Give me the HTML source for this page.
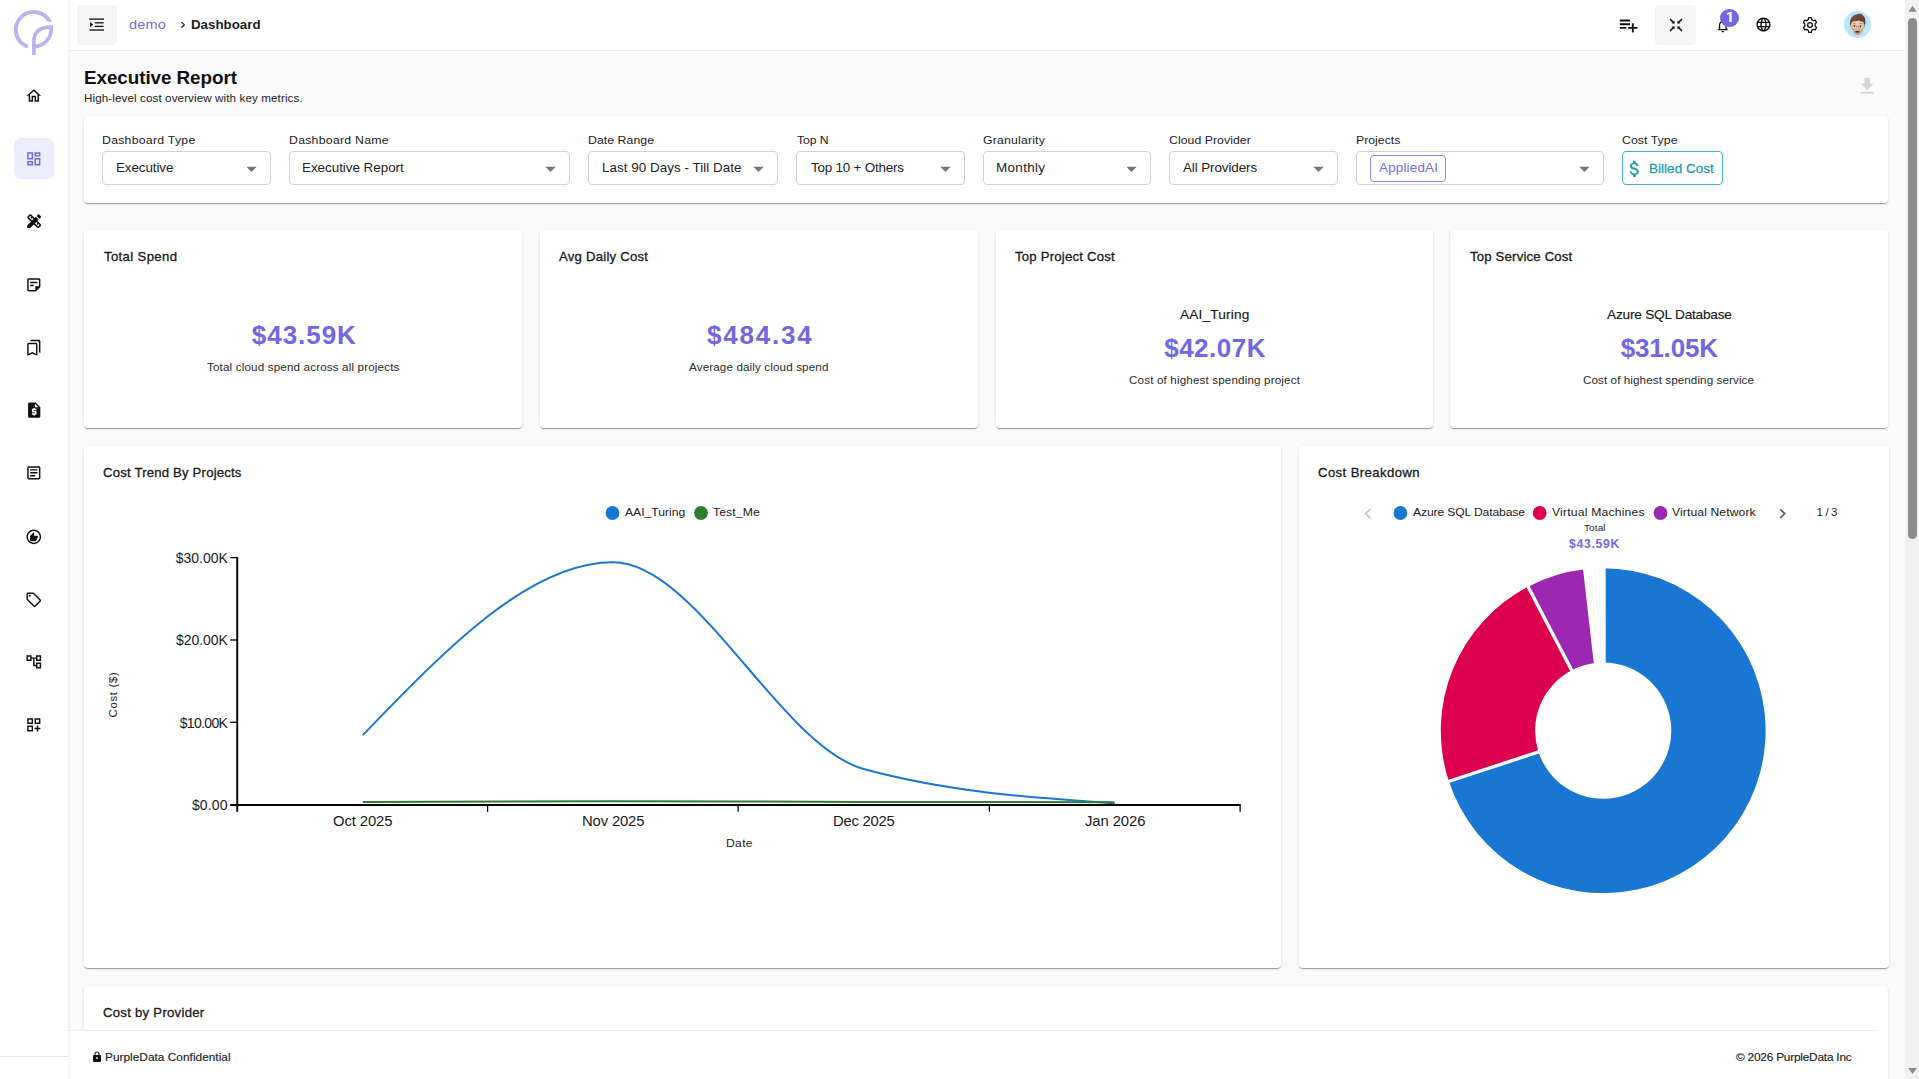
<!DOCTYPE html>
<html lang="en"><head><meta charset="utf-8"><title>Executive Report</title>
<style>
html,body{margin:0;padding:0}
html{width:1919px;height:1079px;overflow:hidden}
body{width:1919px;height:1079px;overflow:hidden;background:#fafafa;position:relative;font-family:"Liberation Sans",sans-serif}
.a{position:absolute;display:block}
.t{position:absolute;white-space:nowrap;line-height:1;font-family:"Liberation Sans",sans-serif}
.card{background:#fff;border-radius:4px;box-shadow:0 2px 1px -1px rgba(0,0,0,.2),0 1px 1px 0 rgba(0,0,0,.14),0 1px 3px 0 rgba(0,0,0,.12)}
.sel{box-sizing:border-box;border:1px solid #d2d2d2;border-radius:4px;background:#fff}
</style></head>
<body>
<div class="a card" style="left:84px;top:116px;width:1804px;height:87px"></div>
<div class="a sel" style="left:102px;top:151.300px;width:169px;height:33.300px"></div>
<svg class="a" style="left:246.00px;top:160px" width="16" height="16" viewBox="0 0 16 16"><path d="M0.300 6.750 H10.700 L5.500 12.050Z" fill="#757575"/></svg>
<div class="a sel" style="left:289px;top:151.300px;width:281px;height:33.300px"></div>
<svg class="a" style="left:545.00px;top:160px" width="16" height="16" viewBox="0 0 16 16"><path d="M0.300 6.750 H10.700 L5.500 12.050Z" fill="#757575"/></svg>
<div class="a sel" style="left:588px;top:151.300px;width:190px;height:33.300px"></div>
<svg class="a" style="left:753.00px;top:160px" width="16" height="16" viewBox="0 0 16 16"><path d="M0.300 6.750 H10.700 L5.500 12.050Z" fill="#757575"/></svg>
<div class="a sel" style="left:796px;top:151.300px;width:169px;height:33.300px"></div>
<svg class="a" style="left:940.00px;top:160px" width="16" height="16" viewBox="0 0 16 16"><path d="M0.300 6.750 H10.700 L5.500 12.050Z" fill="#757575"/></svg>
<div class="a sel" style="left:983px;top:151.300px;width:168px;height:33.300px"></div>
<svg class="a" style="left:1126.00px;top:160px" width="16" height="16" viewBox="0 0 16 16"><path d="M0.300 6.750 H10.700 L5.500 12.050Z" fill="#757575"/></svg>
<div class="a sel" style="left:1169px;top:151.300px;width:169px;height:33.300px"></div>
<svg class="a" style="left:1313.00px;top:160px" width="16" height="16" viewBox="0 0 16 16"><path d="M0.300 6.750 H10.700 L5.500 12.050Z" fill="#757575"/></svg>
<div class="a sel" style="left:1356px;top:151.300px;width:248px;height:33.300px"></div>
<svg class="a" style="left:1579.00px;top:160px" width="16" height="16" viewBox="0 0 16 16"><path d="M0.300 6.750 H10.700 L5.500 12.050Z" fill="#757575"/></svg>
<div class="a" style="left:1369.900px;top:155px;width:75.900px;height:26.900px;box-sizing:border-box;border:1px solid #9087ee;border-radius:4px"></div>
<div class="a" style="left:1622px;top:151.300px;width:100.800px;height:33.400px;box-sizing:border-box;border:1px solid #45b3c2;border-radius:4px"></div>
<svg class="a" style="left:1623.800px;top:157.600px" width="21.600" height="21.600" viewBox="0 0 24 24" fill="#1f9cae"><path d="M11.800 10.900c-2.270-.59-3-1.200-3-2.150 0-1.090 1.010-1.850 2.700-1.850 1.780 0 2.440.85 2.500 2.100h2.210c-.07-1.720-1.120-3.300-3.210-3.810V3h-3v2.160c-1.940.42-3.500 1.680-3.500 3.610 0 2.310 1.910 3.460 4.700 4.130 2.500.6 3 1.480 3 2.410 0 .69-.49 1.790-2.700 1.790-2.060 0-2.870-.92-2.980-2.100h-2.200c.12 2.190 1.760 3.420 3.680 3.830V21h3v-2.150c1.950-.37 3.500-1.500 3.500-3.550 0-2.840-2.430-3.810-4.700-4.400z"/></svg>
<div class="a card" style="left:84px;top:229.8px;width:437.9px;height:198.6px"></div>
<div class="a card" style="left:539.7px;top:229.8px;width:437.9px;height:198.6px"></div>
<div class="a card" style="left:995.6px;top:229.8px;width:437.9px;height:198.6px"></div>
<div class="a card" style="left:1449.8px;top:229.8px;width:437.9px;height:198.6px"></div>
<div class="a card" style="left:84px;top:446px;width:1196.8px;height:521.8px"></div>
<svg class="a" style="left:84px;top:446px" width="1197" height="522" viewBox="84 446 1197 522"><path d="M362.80 735.10 C446.20 648.65 529.60 562.20 613.00 562.20 C696.57 562.20 780.13 746.08 863.70 769.00 C947.33 791.93 1030.97 797.67 1114.60 803.40" fill="none" stroke="#1976d2" stroke-width="2"/><path d="M362.80 801.90 C446.20 801.55 529.60 801.20 613.00 801.20 C696.57 801.20 780.13 801.73 863.70 801.90 C947.33 802.07 1030.97 802.13 1114.60 802.20" fill="none" stroke="#2e7d32" stroke-width="2"/><g stroke="#000" fill="none"><path d="M237.250 556.950 V811.800" stroke-width="1.900"/><path d="M230.200 805 H1240.700" stroke-width="2"/><path d="M230.200 557.6 H237.200" stroke-width="1.300"/><path d="M230.200 640.0 H237.200" stroke-width="1.300"/><path d="M230.200 722.3 H237.200" stroke-width="1.300"/><path d="M487.6 805 V811.800" stroke-width="1.300"/><path d="M738.1 805 V811.800" stroke-width="1.300"/><path d="M989.4 805 V811.800" stroke-width="1.300"/><path d="M1240.1 805 V811.800" stroke-width="1.300"/></g><circle cx="612.500" cy="513" r="6.900" fill="#1976d2"/><circle cx="701" cy="513" r="6.900" fill="#2e7d32"/></svg>
<div class="a card" style="left:1299.2px;top:446px;width:589.9px;height:521.8px"></div>
<svg class="a" style="left:1299px;top:446px" width="590" height="522" viewBox="1299 446 590 522"><path d="M1603.20 568.30 A162.4 162.4 0 1 1 1448.89 781.32 L1538.49 751.92 A68.1 68.1 0 1 0 1603.20 662.60 Z" fill="#1976d2"/><path d="M1448.89 781.32 A162.4 162.4 0 0 1 1528.06 586.73 L1571.69 670.33 A68.1 68.1 0 0 0 1538.49 751.92 Z" fill="#dc004e"/><path d="M1528.06 586.73 A162.4 162.4 0 0 1 1584.76 569.35 L1595.47 663.04 A68.1 68.1 0 0 0 1571.69 670.33 Z" fill="#9c27b0"/><path d="M1603.20 665.60 L1603.20 565.30" stroke="#fff" stroke-width="5"/><path d="M1541.34 750.99 L1446.04 782.25" stroke="#fff" stroke-width="3.4"/><path d="M1573.08 672.99 L1526.67 584.07" stroke="#fff" stroke-width="3.4"/><path d="M1595.81 666.02 L1584.42 566.37" stroke="#fff" stroke-width="3.400"/><path d="M1597.90 661.80 L1590.82 569.78" stroke="#eef0fb" stroke-width="0.600"/><path d="M1599.82 661.68 L1595.32 569.49" stroke="#eef0fb" stroke-width="0.600"/><path d="M1601.27 661.63 L1598.69 569.36" stroke="#eef0fb" stroke-width="0.600"/><circle cx="1400.400" cy="513" r="6.900" fill="#1976d2"/><circle cx="1539.700" cy="513" r="6.900" fill="#dc004e"/><circle cx="1660.500" cy="513" r="6.900" fill="#9c27b0"/><path d="M1370.400 509.200 L1365.600 513.600 L1370.400 518" fill="none" stroke="#c9c9c9" stroke-width="1.800"/><path d="M1780.200 509.400 L1784.800 513.600 L1780.200 517.800" fill="none" stroke="#5a5a5a" stroke-width="1.600"/></svg>
<div class="a card" style="border-radius:4px 4px 0 0;left:84px;top:986px;width:1804.4px;height:93px"></div>
<div class="a" style="left:68px;top:1030px;width:1809px;height:48px;background:#fff;border-top:1px solid #efefef"></div>
<svg class="a" style="left:91.300px;top:1051.300px" width="12" height="12" viewBox="0 0 24 24" fill="#111"><path d="M18 8h-1V6c0-2.760-2.240-5-5-5S7 3.240 7 6v2H6c-1.100 0-2 .9-2 2v10c0 1.100.9 2 2 2h12c1.100 0 2-.9 2-2V10c0-1.100-.9-2-2-2zM9 6c0-1.660 1.340-3 3-3s3 1.340 3 3v2H9V6z"/><rect x="10.300" y="12.500" width="3.400" height="3" fill="#fff"/></svg>
<div class="a" style="left:1905px;top:0;width:14px;height:1079px;background:#f1f1f1"></div>
<div class="a" style="left:1908px;top:17.500px;width:9px;height:521.500px;border-radius:4.500px;background:#8a8a8a"></div>
<svg class="a" style="left:1905px;top:0" width="14" height="1079" viewBox="1905 0 14 1079" fill="#8a8a8a"><path d="M1908.500 11.700 H1916.700 L1912.600 5.800Z"/><path d="M1908.300 1068.100 H1916.900 L1912.600 1074Z"/></svg>
<div class="a" style="left:68px;top:0;width:1837px;height:50px;background:#fff;border-bottom:1px solid #ececec"></div>
<div class="a" style="left:77px;top:5px;width:40px;height:39.700px;border-radius:4px;background:#f5f5f5"></div>
<svg class="a" style="left:85px;top:13px" width="24" height="24" viewBox="85 13 24 24" fill="#111">
<rect x="89.400" y="18.450" width="14.600" height="1.300"/><rect x="94.800" y="22.150" width="8.800" height="1.300"/>
<rect x="94.800" y="25.750" width="8.800" height="1.300"/><rect x="89.400" y="29.350" width="14.600" height="1.300"/>
<path d="M90 22.200 L93.200 24.600 L90 27z"/></svg>
<svg class="a" style="left:176px;top:16px" width="14" height="18" viewBox="176 16 14 18" fill="none" stroke="#222" stroke-width="1.250"><path d="M181.300 22.100 L184.400 24.900 L181.300 27.700"/></svg>
<svg class="a" style="left:1617.30px;top:13.70px" width="22.300" height="22.300" viewBox="0 0 24 24" fill="#111"><path d="M14 10H3v2h11v-2zm0-4H3v2h11V6zm4 8v-4h-2v4h-4v2h4v4h2v-4h4v-2h-4zM3 16h7v-2H3v2z"/></svg>
<div class="a" style="left:1655.300px;top:5px;width:40.300px;height:39.700px;border-radius:4px;background:#f5f5f5"></div>
<svg class="a" style="left:1663.900px;top:12.900px" width="24" height="24" viewBox="1663.900 12.900 24 24" fill="#111" stroke="#111"><path d="M1670.00 19.00 L1672.90 21.90" stroke-width="1.500" fill="none"/><path d="M1674.60 23.60 L1674.20 20.30 L1671.30 23.20Z" stroke="none"/><path d="M1681.80 19.00 L1678.90 21.90" stroke-width="1.500" fill="none"/><path d="M1677.20 23.60 L1677.60 20.30 L1680.50 23.20Z" stroke="none"/><path d="M1670.00 30.80 L1672.90 27.90" stroke-width="1.500" fill="none"/><path d="M1674.60 26.20 L1674.20 29.50 L1671.30 26.60Z" stroke="none"/><path d="M1681.80 30.80 L1678.90 27.90" stroke-width="1.500" fill="none"/><path d="M1677.20 26.20 L1677.60 29.50 L1680.50 26.60Z" stroke="none"/></svg>
<svg class="a" style="left:1714.900px;top:17.600px" width="15.600" height="15.600" viewBox="0 0 24 24" fill="#111"><path d="M12 22c1.100 0 2-.9 2-2h-4c0 1.100.9 2 2 2zm6-6v-5c0-3.070-1.630-5.640-4.500-6.320V4c0-.83-.67-1.500-1.500-1.500s-1.500.67-1.500 1.500v.68C7.640 5.360 6 7.920 6 11v5l-2 2v1h16v-1l-2-2zm-2 1H8v-6c0-2.480 1.510-4.500 4-4.500s4 2.020 4 4.500v6z"/></svg>
<div class="a" style="left:1720.200px;top:8.700px;width:18.800px;height:18.400px;border-radius:50%;background:#7166e6"></div>
<svg class="a" style="left:1720px;top:8px" width="20" height="20" viewBox="1720 8 20 20"><path d="M1731.700 11.900 V22.100 H1729.300 V14.300 L1727.100 14.900 V12.900 L1729.700 11.900Z" fill="#fff"/></svg>
<svg class="a" style="left:1754.900px;top:16.100px" width="17" height="17" viewBox="0 0 24 24" fill="#111"><path d="M11.990 2C6.470 2 2 6.480 2 12s4.470 10 9.990 10C17.520 22 22 17.520 22 12S17.520 2 11.990 2zm6.930 6h-2.950c-.32-1.250-.78-2.450-1.380-3.560 1.840.63 3.370 1.910 4.330 3.560zM12 4.040c.83 1.200 1.480 2.530 1.910 3.960h-3.820c.43-1.430 1.080-2.760 1.910-3.960zM4.260 14C4.100 13.360 4 12.690 4 12s.1-1.360.26-2h3.380c-.08.660-.14 1.320-.14 2 0 .68.060 1.340.14 2H4.260zm.82 2h2.950c.32 1.250.78 2.450 1.380 3.560-1.840-.63-3.370-1.900-4.330-3.560zm2.950-8H5.080c.96-1.660 2.490-2.930 4.330-3.560C8.810 5.550 8.350 6.750 8.030 8zM12 19.960c-.83-1.200-1.480-2.530-1.910-3.960h3.820c-.43 1.430-1.080 2.760-1.910 3.960zM14.340 14H9.660c-.09-.66-.16-1.320-.16-2 0-.68.070-1.350.16-2h4.680c.09.650.16 1.320.16 2 0 .68-.07 1.340-.16 2zm.25 5.560c.6-1.110 1.060-2.310 1.380-3.560h2.950c-.96 1.650-2.490 2.930-4.330 3.560zM16.360 14c.08-.66.14-1.320.14-2 0-.68-.06-1.340-.14-2h3.380c.16.640.26 1.310.26 2s-.1 1.360-.26 2h-3.380z"/></svg>
<svg class="a" style="left:1797.80px;top:12.80px" width="24" height="24" viewBox="1797.80 12.80 24 24" fill="none" stroke="#111" stroke-width="1.300" stroke-linejoin="round"><path d="M1808.09 19.46 L1808.54 17.47 L1811.06 17.47 L1811.51 19.46 L1813.25 20.54 L1815.07 19.96 L1816.33 22.31 L1814.96 23.72 L1814.96 25.88 L1816.33 27.29 L1815.07 29.64 L1813.25 29.06 L1811.51 30.14 L1811.06 32.13 L1808.54 32.13 L1808.09 30.14 L1806.35 29.06 L1804.53 29.64 L1803.27 27.29 L1804.64 25.88 L1804.64 23.72 L1803.27 22.31 L1804.53 19.96 L1806.35 20.54Z"/><circle cx="1809.80" cy="24.80" r="2.350"/></svg>
<svg class="a" style="left:1844.00px;top:10.90px" width="27.00" height="27.00" viewBox="0 0 27.200 27.200">
<defs><linearGradient id="sk" x1="0" y1="0" x2="0" y2="1"><stop offset="0" stop-color="#f2d6bd"/><stop offset="0.550" stop-color="#e3b697"/><stop offset="1" stop-color="#cf9a7c"/></linearGradient>
<linearGradient id="hr" x1="0" y1="0" x2="1" y2="1"><stop offset="0" stop-color="#7a5443"/><stop offset="1" stop-color="#553527"/></linearGradient></defs>
<circle cx="13.600" cy="13.600" r="13.600" fill="#b9e6fe"/>
<path d="M6.400 14.500 C6 15.600 6.500 17.400 7.500 17.600 L7.500 14.500Z M20.900 14.600 C21.300 15.700 20.800 17.400 19.900 17.600 L19.900 14.600Z" fill="#d4a083"/>
<path d="M7.100 13 C6.900 20 10.500 24.400 13.700 24.400 C16.900 24.400 20.500 20 20.300 13 C20.100 7.500 7.300 7.500 7.100 13Z" fill="url(#sk)"/>
<path d="M6.300 15.800 C5 9 7.500 3.800 13.300 3.200 C15.800 2.500 18.300 3 18.900 4.300 C21.800 6.500 22.100 11.200 21 15.900 C20.400 13.200 19.700 11.700 19 10.700 C17.600 11 15.900 10.300 14.600 9.300 C13.800 10.600 10 9.900 8.700 10.500 C7.500 11.700 6.900 13.500 6.300 15.800Z" fill="url(#hr)"/>
<path d="M8.700 12.700 Q10.300 12 11.900 12.600 M15.300 12.700 Q16.900 12.100 18.500 12.800" fill="none" stroke="#8a644f" stroke-width="0.600"/>
<rect x="8" y="14.200" width="4.500" height="3.900" rx="1.300" fill="#f3ebe4" fill-opacity="0.550" stroke="#9b948f" stroke-width="0.550"/>
<rect x="14.800" y="14.300" width="4.500" height="3.900" rx="1.300" fill="#f3ebe4" fill-opacity="0.550" stroke="#9b948f" stroke-width="0.550"/>
<path d="M12.500 15.600 H14.800" stroke="#9b948f" stroke-width="0.500"/>
<ellipse cx="10.600" cy="15.400" rx="0.850" ry="0.950" fill="#3f322d"/><ellipse cx="16.600" cy="15.600" rx="0.850" ry="0.950" fill="#3f322d"/>
<path d="M11.100 20.400 Q13.500 19.900 15.900 20.400 Q15.300 22.300 13.500 22.300 Q11.700 22.300 11.100 20.400Z" fill="#4b2822"/>
<path d="M12 21.500 Q13.500 21 15 21.500 Q14.400 22.300 13.500 22.300 Q12.600 22.300 12 21.500Z" fill="#a55b4e"/>
</svg>
<svg class="a" style="left:1856.30px;top:75.40px" width="22.400" height="22.400" viewBox="0 0 24 24" fill="#d6d6d6"><path d="M5 20h14v-2H5v2zM19 9h-4V3H9v6H5l7 7 7-7z"/></svg>
<div class="a" style="left:0;top:0;width:68px;height:1079px;background:#fff;box-shadow:1px 0 3px rgba(0,0,0,.055)"></div>
<svg class="a" style="left:0;top:0" width="68" height="62" viewBox="0 0 68 62" fill="none" stroke="#bab3f1" stroke-width="3.9">
<path d="M50.250 23.110 A17.850 17.850 0 1 0 27.800 46.650"/>
<path d="M46 21 L54.500 22.900 V25 H46Z" fill="#fff" stroke="none"/>
<path d="M33.900 55 V41 C33.900 31.500 41 26.600 51.300 27.100 C51.800 38.500 44.500 45.800 34.300 46.800" stroke-width="3.700" stroke-linejoin="miter"/>
</svg>
<div class="a" style="left:14px;top:138px;width:40px;height:41px;border-radius:7px;background:#edecfb"></div>
<svg class="a" style="left:25.10px;top:86.70px" width="17.6" height="17.6" viewBox="0 0 24 24" fill="#111"><path d="M12 5.69l5 4.5V18h-2v-6H9v6H7v-7.81l5-4.5M12 3L2 12h3v8h6v-6h2v6h6v-8h3L12 3z"/></svg>
<svg class="a" style="left:25.10px;top:150.10px" width="17.6" height="17.6" viewBox="0 0 24 24" fill="#7166e6"><path d="M19 5v2h-4V5h4M9 5v6H5V5h4m10 8v6h-4v-6h4M9 17v2H5v-2h4M21 3h-8v6h8V3zM11 3H3v10h8V3zm10 8h-8v10h8V11zm-10 4H3v6h8v-6z"/></svg>
<svg class="a" style="left:24.70px;top:211.80px" width="18.4" height="18.4" viewBox="0 0 24 24" fill="#111"><path d="M16.24 11.51l1.57-1.57-3.75-3.75-1.57 1.57-4.14-4.13c-.78-.78-2.05-.78-2.83 0l-1.9 1.9c-.78.78-.78 2.05 0 2.83l4.13 4.13L3 17.25V21h3.75l4.76-4.76 4.13 4.13c.95.95 2.23.6 2.83 0l1.9-1.9c.78-.78.78-2.05 0-2.83l-4.13-4.13zm-7.06-.44L5.04 6.94l1.89-1.9L8.2 6.31 7.02 7.5l1.41 1.41 1.19-1.19 1.45 1.45-1.89 1.9zm7.88 7.89l-4.13-4.13 1.9-1.9 1.45 1.45-1.19 1.19 1.41 1.41 1.19-1.19 1.27 1.27-1.9 1.9zM20.71 7.04c.39-.39.39-1.02 0-1.41l-2.34-2.34c-.47-.47-1.12-.29-1.41 0l-1.83 1.83 3.75 3.75 1.83-1.83z"/></svg>
<svg class="a" style="left:25.10px;top:276.10px" width="17.6" height="17.6" viewBox="0 0 24 24" fill="#111"><path d="M19 5v9h-5v5H5V5h14m0-2H5c-1.1 0-2 .9-2 2v14c0 1.1.9 2 2 2h10l6-6V5c0-1.1-.9-2-2-2zm-7 11H7v-2h5v2zm5-4H7V8h10v2z"/></svg>
<svg class="a" style="left:25.10px;top:339.00px" width="17.6" height="17.6" viewBox="0 0 24 24" fill="#111"><path d="M15 7v12.97l-4.21-1.81-.79-.34-.79.34L5 19.97V7h10m4-6H8.99C7.89 1 7 1.9 7 3h10c1.1 0 2 .9 2 2v13l2 1V3c0-1.1-.9-2-2-2zm-4 4H5c-1.1 0-2 .9-2 2v16l7-3 7 3V7c0-1.1-.9-2-2-2z"/></svg>
<svg class="a" style="left:24.70px;top:401.10px" width="18.4" height="18.4" viewBox="0 0 24 24" fill="#111"><path d="M14 2H6c-1.1 0-2 .9-2 2v16c0 1.1.9 2 2 2h12c1.1 0 2-.9 2-2V8l-6-6zm1 10h-4v1h3c.55 0 1 .45 1 1v3c0 .55-.45 1-1 1h-1v1h-2v-1H9v-2h4v-1h-3c-.55 0-1-.45-1-1v-3c0-.55.45-1 1-1h1V9h2v1h2v2zm-2-4V3.5L17.500 8H13z"/></svg>
<svg class="a" style="left:25.10px;top:464.20px" width="17.6" height="17.6" viewBox="0 0 24 24" fill="#111"><path d="M19 5v14H5V5h14m0-2H5c-1.1 0-2 .9-2 2v14c0 1.1.9 2 2 2h14c1.1 0 2-.9 2-2V5c0-1.1-.9-2-2-2z"/><path d="M14 17H7v-2h7v2zm3-4H7v-2h10v2zm0-4H7V7h10v2z"/></svg>
<svg class="a" style="left:25.10px;top:527.90px" width="17.6" height="17.6" viewBox="0 0 24 24" fill="#111"><path d="M12 2C6.480 2 2 6.480 2 12s4.480 10 10 10 10-4.480 10-10S17.520 2 12 2zm0 18c-4.410 0-8-3.590-8-8s3.590-8 8-8 8 3.590 8 8-3.590 8-8 8z"/><path d="M12.300 5.300L6.800 10.800V16.500c0 .83.67 1.500 1.500 1.500h5.700c.6 0 1.140-.36 1.380-.91l2.100-4.600c.4-.9-.3-1.990-1.300-1.990h-4.100l.63-3.030c.07-.33-.03-.67-.27-.91z"/></svg>
<svg class="a" style="left:25.10px;top:590.90px" width="17.6" height="17.6" viewBox="0 0 24 24" fill="#111"><path d="M21.410 11.580l-9-9C12.050 2.220 11.550 2 11 2H4c-1.100 0-2 .9-2 2v7c0 .55.220 1.050.59 1.420l9 9c.36.360.86.580 1.410.580s1.050-.220 1.410-.590l7-7c.37-.360.59-.860.59-1.410s-.23-1.060-.59-1.420zM13 20.010L4 11V4h7v-.010l9 9-7 7.020z"/><circle cx="6.500" cy="6.500" r="1.500"/></svg>
<svg class="a" style="left:25.10px;top:653.20px" width="17.6" height="17.6" viewBox="0 0 24 24" fill="#111"><path d="M22 11V3h-7v3H9V3H2v8h7V8h2v10h4v3h7v-8h-7v3h-2V8h2v3h7zM7 9H4V5h3v4zm10 6h3v4h-3v-4zm0-10h3v4h-3V5z"/></svg>
<svg class="a" style="left:25.10px;top:716.20px" width="17.6" height="17.6" viewBox="0 0 24 24" fill="#111"><path d="M3 11h8V3H3v8zm2-6h4v4H5V5zm8-2v8h8V3h-8zm6 6h-4V5h4v4zM3 21h8v-8H3v8zm2-6h4v4H5v-4zm13-2h-2v3h-3v2h3v3h2v-3h3v-2h-3v-3z"/></svg>
<div class="a" style="left:0;top:1056px;width:68px;height:1px;background:#e4e4e4"></div>
<span class="t" style="left:128.54px;top:18.00px;font-size:13.2px;font-weight:400;color:#766bec;letter-spacing:0.160px;transform:scaleX(1.1);transform-origin:0 50%;">demo</span>
<span class="t" style="left:190.59px;top:19.00px;font-size:12.6px;font-weight:700;color:#1e1e1e;letter-spacing:-0.018px;transform:scaleX(1.06);transform-origin:0 50%;">Dashboard</span>
<span class="t" style="left:84.00px;top:70.00px;font-size:17.8px;font-weight:700;color:#111;letter-spacing:-0.063px;transform:scaleX(1.06);transform-origin:0 50%;">Executive Report</span>
<span class="t" style="left:84.42px;top:93.00px;font-size:11px;font-weight:400;color:#222;letter-spacing:0.081px;transform:scaleX(1.06);transform-origin:0 50%;">High-level cost overview with key metrics.</span>
<span class="t" style="left:101.84px;top:134.00px;font-size:11.6px;font-weight:400;color:#222;letter-spacing:0.238px;transform:scaleX(1.06);transform-origin:0 50%;">Dashboard Type</span>
<span class="t" style="left:288.79px;top:134.00px;font-size:11.6px;font-weight:400;color:#222;letter-spacing:0.241px;transform:scaleX(1.06);transform-origin:0 50%;">Dashboard Name</span>
<span class="t" style="left:588.45px;top:134.00px;font-size:11.6px;font-weight:400;color:#222;letter-spacing:0.041px;transform:scaleX(1.06);transform-origin:0 50%;">Date Range</span>
<span class="t" style="left:796.71px;top:134.00px;font-size:11.6px;font-weight:400;color:#222;letter-spacing:-0.134px;transform:scaleX(1.06);transform-origin:0 50%;">Top N</span>
<span class="t" style="left:982.77px;top:134.00px;font-size:11.6px;font-weight:400;color:#222;letter-spacing:0.159px;transform:scaleX(1.06);transform-origin:0 50%;">Granularity</span>
<span class="t" style="left:1168.95px;top:134.00px;font-size:11.6px;font-weight:400;color:#222;letter-spacing:0.033px;transform:scaleX(1.06);transform-origin:0 50%;">Cloud Provider</span>
<span class="t" style="left:1356.12px;top:134.00px;font-size:11.6px;font-weight:400;color:#222;letter-spacing:-0.003px;transform:scaleX(1.06);transform-origin:0 50%;">Projects</span>
<span class="t" style="left:1621.66px;top:134.00px;font-size:11.6px;font-weight:400;color:#222;letter-spacing:0.044px;transform:scaleX(1.06);transform-origin:0 50%;">Cost Type</span>
<span class="t" style="left:115.63px;top:162.00px;font-size:12.7px;font-weight:400;color:#222;letter-spacing:-0.110px;transform:scaleX(1.06);transform-origin:0 50%;">Executive</span>
<span class="t" style="left:302.15px;top:162.00px;font-size:12.7px;font-weight:400;color:#222;letter-spacing:-0.040px;transform:scaleX(1.06);transform-origin:0 50%;">Executive Report</span>
<span class="t" style="left:602.08px;top:162.00px;font-size:12.7px;font-weight:400;color:#222;letter-spacing:0.020px;transform:scaleX(1.06);transform-origin:0 50%;">Last 90 Days - Till Date</span>
<span class="t" style="left:810.94px;top:162.00px;font-size:12.7px;font-weight:400;color:#222;letter-spacing:-0.201px;transform:scaleX(1.06);transform-origin:0 50%;">Top 10 + Others</span>
<span class="t" style="left:996.35px;top:162.00px;font-size:12.7px;font-weight:400;color:#222;letter-spacing:0.306px;transform:scaleX(1.06);transform-origin:0 50%;">Monthly</span>
<span class="t" style="left:1183.20px;top:162.00px;font-size:12.7px;font-weight:400;color:#222;letter-spacing:-0.102px;transform:scaleX(1.06);transform-origin:0 50%;">All Providers</span>
<span class="t" style="left:1379.15px;top:162.00px;font-size:12.7px;font-weight:400;color:#766bec;letter-spacing:0.158px;transform:scaleX(1.06);transform-origin:0 50%;">AppliedAI</span>
<span class="t" style="left:1648.99px;top:163.00px;font-size:12.7px;font-weight:400;color:#1f9cae;letter-spacing:0.041px;-webkit-text-stroke:0.3px;transform:scaleX(1.06);transform-origin:0 50%;">Billed Cost</span>
<span class="t" style="left:103.91px;top:251.00px;font-size:12.4px;font-weight:400;color:#1a1a1a;letter-spacing:0.339px;-webkit-text-stroke:0.3px;transform:scaleX(1.06);transform-origin:0 50%;">Total Spend</span>
<span class="t" style="left:558.69px;top:251.00px;font-size:12.4px;font-weight:400;color:#1a1a1a;letter-spacing:0.221px;-webkit-text-stroke:0.3px;transform:scaleX(1.06);transform-origin:0 50%;">Avg Daily Cost</span>
<span class="t" style="left:1015.26px;top:251.00px;font-size:12.4px;font-weight:400;color:#1a1a1a;letter-spacing:0.214px;-webkit-text-stroke:0.3px;transform:scaleX(1.06);transform-origin:0 50%;">Top Project Cost</span>
<span class="t" style="left:1469.72px;top:251.00px;font-size:12.4px;font-weight:400;color:#1a1a1a;letter-spacing:0.188px;-webkit-text-stroke:0.3px;transform:scaleX(1.06);transform-origin:0 50%;">Top Service Cost</span>
<span class="t" style="left:251.79px;top:322.00px;font-size:26px;font-weight:700;color:#7166e6;letter-spacing:0.965px;">$43.59K</span>
<span class="t" style="left:706.96px;top:322.00px;font-size:26px;font-weight:700;color:#7166e6;letter-spacing:1.780px;">$484.34</span>
<span class="t" style="left:206.69px;top:362.00px;font-size:11px;font-weight:400;color:#2a2a2a;letter-spacing:0.133px;transform:scaleX(1.06);transform-origin:0 50%;">Total cloud spend across all projects</span>
<span class="t" style="left:689.33px;top:362.00px;font-size:11px;font-weight:400;color:#2a2a2a;letter-spacing:0.112px;transform:scaleX(1.06);transform-origin:0 50%;">Average daily cloud spend</span>
<span class="t" style="left:1180.28px;top:309.00px;font-size:12.9px;font-weight:400;color:#1a1a1a;letter-spacing:0.145px;-webkit-text-stroke:0.15px;transform:scaleX(1.06);transform-origin:0 50%;">AAI_Turing</span>
<span class="t" style="left:1606.83px;top:309.00px;font-size:12.9px;font-weight:400;color:#1a1a1a;letter-spacing:-0.202px;-webkit-text-stroke:0.15px;transform:scaleX(1.06);transform-origin:0 50%;">Azure SQL Database</span>
<span class="t" style="left:1164.19px;top:335.00px;font-size:26px;font-weight:700;color:#7166e6;letter-spacing:0.506px;">$42.07K</span>
<span class="t" style="left:1620.76px;top:335.00px;font-size:26px;font-weight:700;color:#7166e6;letter-spacing:-0.173px;">$31.05K</span>
<span class="t" style="left:1129.14px;top:375.00px;font-size:11px;font-weight:400;color:#2a2a2a;letter-spacing:0.132px;transform:scaleX(1.06);transform-origin:0 50%;">Cost of highest spending project</span>
<span class="t" style="left:1583.42px;top:375.00px;font-size:11px;font-weight:400;color:#2a2a2a;letter-spacing:0.074px;transform:scaleX(1.06);transform-origin:0 50%;">Cost of highest spending service</span>
<span class="t" style="left:103.29px;top:467.00px;font-size:12.4px;font-weight:400;color:#1a1a1a;letter-spacing:0.185px;-webkit-text-stroke:0.3px;transform:scaleX(1.06);transform-origin:0 50%;">Cost Trend By Projects</span>
<span class="t" style="left:1318.17px;top:467.00px;font-size:12.4px;font-weight:400;color:#1a1a1a;letter-spacing:0.380px;-webkit-text-stroke:0.3px;transform:scaleX(1.06);transform-origin:0 50%;">Cost Breakdown</span>
<span class="t" style="left:102.89px;top:1007.00px;font-size:12.4px;font-weight:400;color:#1a1a1a;letter-spacing:0.258px;-webkit-text-stroke:0.3px;transform:scaleX(1.06);transform-origin:0 50%;">Cost by Provider</span>
<span class="t" style="left:624.95px;top:507.00px;font-size:11.5px;font-weight:400;color:#222;letter-spacing:-0.028px;transform:scaleX(1.06);transform-origin:0 50%;">AAI_Turing</span>
<span class="t" style="left:712.66px;top:507.00px;font-size:11.5px;font-weight:400;color:#222;letter-spacing:0.099px;transform:scaleX(1.06);transform-origin:0 50%;">Test_Me</span>
<span class="t" style="left:175.76px;top:551.00px;font-size:14px;font-weight:400;color:#1a1a1a;letter-spacing:-0.001px;">$30.00K</span>
<span class="t" style="left:175.94px;top:633.00px;font-size:14px;font-weight:400;color:#1a1a1a;letter-spacing:-0.036px;">$20.00K</span>
<span class="t" style="left:179.76px;top:716.00px;font-size:14px;font-weight:400;color:#1a1a1a;letter-spacing:-0.668px;">$10.00K</span>
<span class="t" style="left:191.89px;top:798.00px;font-size:14px;font-weight:400;color:#1a1a1a;letter-spacing:0.147px;">$0.00</span>
<span class="t" style="left:332.50px;top:814.00px;font-size:14px;font-weight:400;color:#1a1a1a;letter-spacing:-0.095px;transform:scaleX(1.06);transform-origin:0 50%;">Oct 2025</span>
<span class="t" style="left:581.76px;top:814.00px;font-size:14px;font-weight:400;color:#1a1a1a;letter-spacing:-0.146px;transform:scaleX(1.06);transform-origin:0 50%;">Nov 2025</span>
<span class="t" style="left:833.11px;top:814.00px;font-size:14px;font-weight:400;color:#1a1a1a;letter-spacing:-0.231px;transform:scaleX(1.06);transform-origin:0 50%;">Dec 2025</span>
<span class="t" style="left:1085.22px;top:814.00px;font-size:14px;font-weight:400;color:#1a1a1a;letter-spacing:-0.092px;transform:scaleX(1.06);transform-origin:0 50%;">Jan 2026</span>
<span class="t" style="left:725.75px;top:838.00px;font-size:11.5px;font-weight:400;color:#222;letter-spacing:0.267px;transform:scaleX(1.06);transform-origin:0 50%;">Date</span>
<span class="t" style="left:1412.50px;top:507.00px;font-size:11.5px;font-weight:400;color:#222;letter-spacing:-0.151px;transform:scaleX(1.06);transform-origin:0 50%;">Azure SQL Database</span>
<span class="t" style="left:1551.93px;top:507.00px;font-size:11.5px;font-weight:400;color:#222;letter-spacing:0.169px;transform:scaleX(1.06);transform-origin:0 50%;">Virtual Machines</span>
<span class="t" style="left:1671.83px;top:507.00px;font-size:11.5px;font-weight:400;color:#222;letter-spacing:0.085px;transform:scaleX(1.06);transform-origin:0 50%;">Virtual Network</span>
<span class="t" style="left:1816.60px;top:507.00px;font-size:11.5px;font-weight:400;color:#222;letter-spacing:-0.398px;">1 / 3</span>
<span class="t" style="left:1583.80px;top:523.00px;font-size:9.4px;font-weight:400;color:#222;letter-spacing:0.137px;transform:scaleX(1.06);transform-origin:0 50%;">Total</span>
<span class="t" style="left:1568.96px;top:538.00px;font-size:12.2px;font-weight:700;color:#7166e6;letter-spacing:0.710px;">$43.59K</span>
<span class="t" style="left:104.92px;top:1052.00px;font-size:11.2px;font-weight:400;color:#222;letter-spacing:0.014px;-webkit-text-stroke:0.15px;transform:scaleX(1.06);transform-origin:0 50%;">PurpleData Confidential</span>
<span class="t" style="left:1736.42px;top:1052.00px;font-size:11.2px;font-weight:400;color:#222;letter-spacing:-0.208px;-webkit-text-stroke:0.15px;transform:scaleX(1.06);transform-origin:0 50%;">© 2026 PurpleData Inc</span>
<span class="t" style="left:62.700px;top:689.300px;width:100px;text-align:center;font-size:11.3px;color:#222;letter-spacing:0.72px;transform:rotate(-90deg);transform-origin:50px 5.500px">Cost ($)</span>
</body></html>
